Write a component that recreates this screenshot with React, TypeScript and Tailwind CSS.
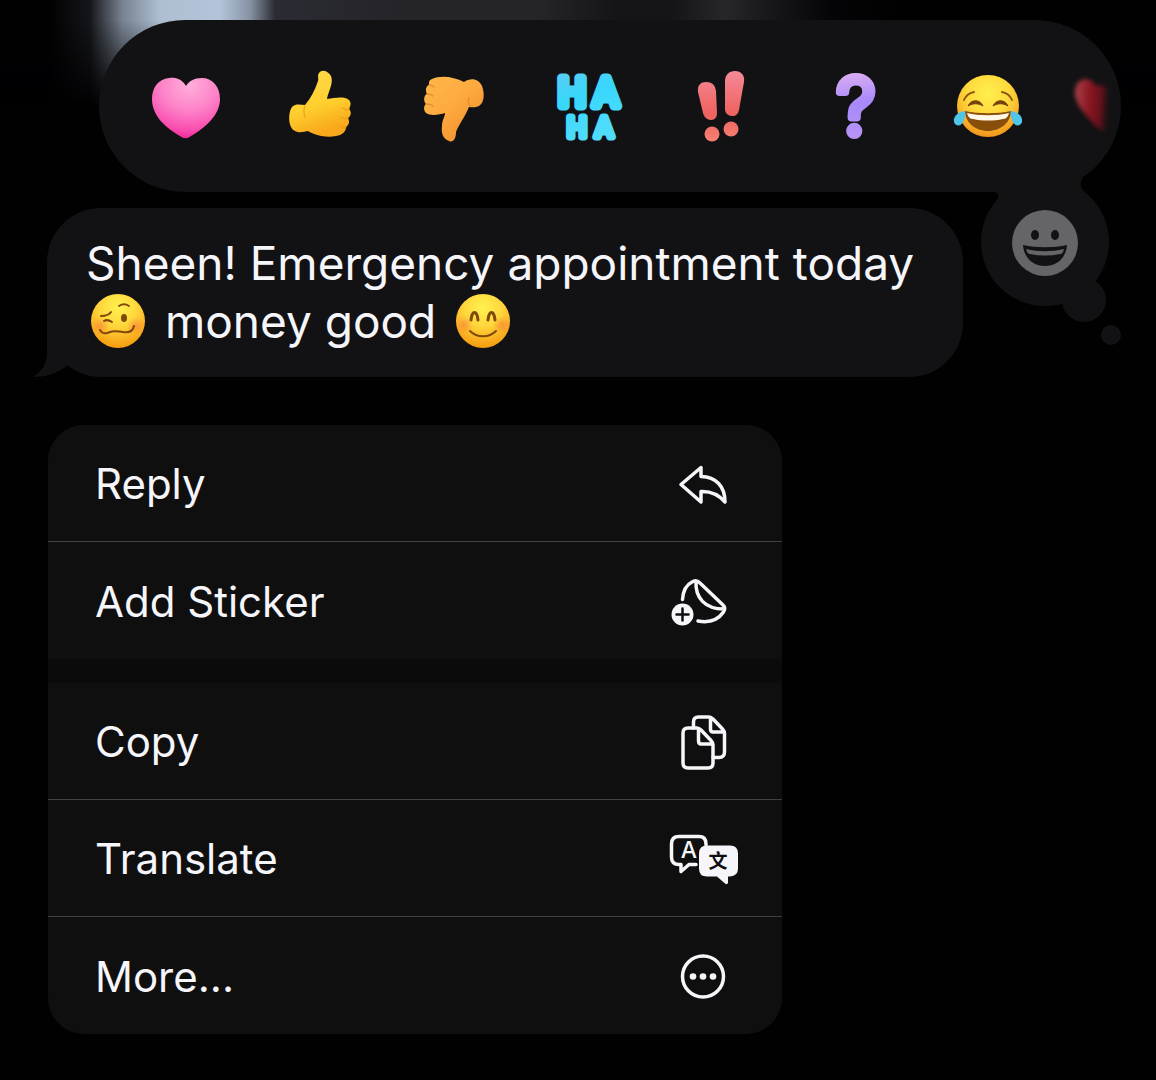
import type { ReactNode } from 'react';

function Heart() {
  return (
    <svg viewBox="0 0 80 80" className="h-20 w-20" aria-hidden="true">
      <defs>
        <radialGradient id="heart-fill" cx="0.55" cy="0.12" r="0.9">
          <stop offset="0" stopColor="#ffaedb" />
          <stop offset="0.45" stopColor="#fd84c9" />
          <stop offset="0.8" stopColor="#fa52b2" />
          <stop offset="1" stopColor="#f6289b" />
        </radialGradient>
      </defs>
      <path
        d="M40 20C35 12 28 11.500 23 12C12 13 6 22 6 33C6 50 20 62 34 70C38 73 41 73 45 70C59 62 74 49 74 33C74 20 66 12 56 12C48 12 43 15 40 20Z"
        fill="url(#heart-fill)"
      />
    </svg>
  );
}

function ThumbsUp() {
  return (
    <svg viewBox="0 0 80 80" className="h-20 w-20" aria-hidden="true">
      <defs>
        <linearGradient id="up-fill" x1="0" y1="0" x2="0.3" y2="1">
          <stop offset="0" stopColor="#ffd84f" />
          <stop offset="0.6" stopColor="#ffd02e" />
          <stop offset="1" stopColor="#f9a81c" />
        </linearGradient>
      </defs>
      <path
        d="M39 7C42 3 48 5 51 10C54 17 48 26 47 33C55 32 64 30 69 34C72 37 70 41 69 43C72 46 71 50 68 52C70 56 69 59 66 61C66 66 62 69 56 70C45 72 35 69 28 65C21 67 14 67 11 61C8 55 9 45 12 41C16 37 21 39 25 39C31 32 35 24 38 15C39 12 37 10 39 7Z"
        fill="url(#up-fill)"
      />
      <path
        d="M62 42C65 44 68 44 69 43M61 51C64 53 67 53 68 52M60 60C63 62 65 62 66 61M25 40C23 44 24 48 25 51"
        fill="none"
        stroke="#eb991c"
        strokeOpacity="0.7"
        strokeWidth="1.500"
        strokeLinecap="round"
      />
    </svg>
  );
}

function ThumbsDown() {
  return (
    <svg viewBox="0 0 80 80" className="h-20 w-20" aria-hidden="true">
      <defs>
        <linearGradient id="down-fill" x1="0" y1="0" x2="0.8" y2="1">
          <stop offset="0" stopColor="#ffb849" />
          <stop offset="0.5" stopColor="#fdaa3f" />
          <stop offset="1" stopColor="#ef8d2c" />
        </linearGradient>
      </defs>
      <path
        d="M18 13C27 9 40 11 50 16C57 11 65 13 68 20C71 28 70 37 65 40C61 42 57 41 55 41C51 51 45 58 42 66C42 73 39 77 35 75C29 73 27 67 28 60C28 54 31 51 31 47C25 49 16 50 12 47C9 44 10 39 12 38C9 35 10 29 13 28C11 24 12 20 15 19C15 16 15 14 18 13Z"
        fill="url(#down-fill)"
      />
      <path
        d="M15 19C17 19 19 20 20 21M13 28C16 28 18 29 19 30M12 38C15 38 18 39 19 40M56 40C54 37 54 34 55 32"
        fill="none"
        stroke="#dd8425"
        strokeOpacity="0.7"
        strokeWidth="1.500"
        strokeLinecap="round"
      />
    </svg>
  );
}

function HaHa() {
  return (
    <svg
      viewBox="0 0 80 80"
      className="h-20 w-20 overflow-visible font-[Roboto,sans-serif]"
      aria-hidden="true"
      fill="url(#haha-fill)"
      stroke="url(#haha-fill)"
      strokeLinejoin="round"
      textAnchor="middle"
    >
      <defs>
        <linearGradient id="haha-fill" gradientUnits="userSpaceOnUse" x1="10" y1="8" x2="35" y2="76">
          <stop offset="0" stopColor="#57cdf3" />
          <stop offset="0.4" stopColor="#38d7fb" />
          <stop offset="1" stopColor="#52dcfb" />
        </linearGradient>
      </defs>
      <text x="24" y="40" fontSize="38" strokeWidth="9">H</text>
      <text x="58" y="40" fontSize="38" strokeWidth="9">A</text>
      <text x="29" y="71" fontSize="27" strokeWidth="7">H</text>
      <text x="56" y="71" fontSize="27" strokeWidth="7">A</text>
    </svg>
  );
}

function Exclaim() {
  return (
    <svg viewBox="0 0 80 80" className="h-20 w-20" aria-hidden="true" fill="url(#bang-fill)">
      <defs>
        <linearGradient id="bang-fill" gradientUnits="userSpaceOnUse" x1="0" y1="5" x2="0" y2="76">
          <stop offset="0" stopColor="#f58a98" />
          <stop offset="0.6" stopColor="#ef625f" />
          <stop offset="1" stopColor="#f58173" />
        </linearGradient>
      </defs>
      <path d="M16 26C15 19 19 16 24 16C30 16 33 19 34 25L35 47C35 51 33 54 29 54C25 54 22 51 21 47Z" />
      <circle cx="30" cy="68" r="7.500" />
      <path d="M43 15C43 9 47 5 53 5C59 5 63 9 62 16L57 44C56 48 54 50 50 50C46 50 43 47 43 43Z" />
      <circle cx="49" cy="63" r="7.500" />
    </svg>
  );
}

function Question() {
  return (
    <svg
      viewBox="0 0 80 80"
      className="h-20 w-20 overflow-visible font-[Inter,sans-serif] font-light"
      aria-hidden="true"
    >
      <defs>
        <linearGradient id="question-fill" gradientUnits="userSpaceOnUse" x1="36" y1="6" x2="42" y2="74">
          <stop offset="0" stopColor="#dcaef1" />
          <stop offset="0.45" stopColor="#a789fa" />
          <stop offset="1" stopColor="#b894f5" />
        </linearGradient>
      </defs>
      <text
        x="40"
        y="69"
        fontSize="78"
        textAnchor="middle"
        fill="url(#question-fill)"
        stroke="url(#question-fill)"
        strokeWidth="8"
        strokeLinejoin="round"
      >
        ?
      </text>
    </svg>
  );
}

function Joy() {
  return (
    <svg viewBox="0 0 80 80" className="h-20 w-20" aria-hidden="true">
      <defs>
        <radialGradient id="joy-fill" cx="0.5" cy="0.3" r="0.7">
          <stop offset="0" stopColor="#fff04d" />
          <stop offset="0.5" stopColor="#ffd83c" />
          <stop offset="1" stopColor="#f2951c" />
        </radialGradient>
      </defs>
      <circle cx="38" cy="40" r="31" fill="url(#joy-fill)" />
      <path d="M14 34C16 29 19 27 24 26M62 34C60 29 57 27 52 26" fill="none" stroke="#8f560c" strokeWidth="2" strokeLinecap="round" />
      <path d="M18 40C21 33 30 33 33 40C28 37 23 37 18 40ZM43 40C46 33 55 33 58 40C53 37 48 37 43 40Z" fill="#74420a" stroke="#74420a" />
      <path d="M15 45C28 48 48 48 61 45C61 56 51 65 38 65C25 65 15 56 15 45Z" fill="#8a4e0b" />
      <path d="M17 47C29 50 47 50 59 47C58 51 56 53 53 53C44 55 32 55 23 53C20 53 18 51 17 47Z" fill="#fff8e8" />
      <path d="M15 45C8 46 3 50 4 56C5 60 11 61 13 56C15 52 16 48 15 45Z" fill="#50c5ea" />
      <path d="M61 45C68 46 73 50 72 56C71 60 65 61 63 56C61 52 60 48 61 45Z" fill="#50c5ea" />
    </svg>
  );
}

function Woozy() {
  return (
    <svg viewBox="0 0 56 56" className="-my-1 mr-1.5 ml-1 inline-block h-14 w-14 align-[-7px]" role="img" aria-label="woozy face">
      <defs>
        <radialGradient id="face-fill" cx="0.5" cy="0.25" r="0.78">
          <stop offset="0" stopColor="#fff24f" />
          <stop offset="0.45" stopColor="#ffd63c" />
          <stop offset="1" stopColor="#f5960c" />
        </radialGradient>
        <radialGradient id="blush">
          <stop offset="0" stopColor="#fa7a3c" stopOpacity="0.6" />
          <stop offset="1" stopColor="#fa7a3c" stopOpacity="0" />
        </radialGradient>
      </defs>
      <circle cx="28" cy="28" r="27" fill="url(#face-fill)" />
      <circle cx="10" cy="33" r="9" fill="url(#blush)" />
      <circle cx="46" cy="33" r="9" fill="url(#blush)" />
      <ellipse cx="34" cy="25" rx="3" ry="4" fill="#80490b" />
      <g fill="none" stroke="#80490b" strokeWidth="2" strokeLinecap="round">
        <path d="M29 13C32 11 36 11 39 13M11 23C15 23 19 22 21 19M14 28C17 26 19 27 22 29" />
        <path d="M10 37C12 41 16 41 20 39C25 37 29 39 33 39C39 40 43 38 44 33" />
      </g>
    </svg>
  );
}

function Smiling() {
  return (
    <svg viewBox="0 0 56 56" className="-my-1 ml-1.5 inline-block h-14 w-14 align-[-7px]" role="img" aria-label="smiling face">
      <circle cx="28" cy="28" r="27" fill="url(#face-fill)" />
      <circle cx="9" cy="32" r="9" fill="url(#blush)" />
      <circle cx="47" cy="32" r="9" fill="url(#blush)" />
      <g fill="none" stroke="#80490b" strokeLinecap="round">
        <path d="M16 27C17 17 22 17 23 27M33 27C34 17 39 17 40 27" strokeWidth="3" />
        <path d="M15 38C22 45 34 45 41 38" strokeWidth="2" />
      </g>
    </svg>
  );
}

function MenuIcon({ children }: { children: ReactNode }) {
  return (
    <svg
      viewBox="0 0 72 72"
      className="h-[72px] w-[72px] shrink-0"
      fill="none"
      stroke="#f5f5fa"
      strokeWidth="3.500"
      strokeLinecap="round"
      strokeLinejoin="round"
      aria-hidden="true"
    >
      {children}
    </svg>
  );
}

const replyIcon = (
  <MenuIcon>
    <path d="M34 19.500L14 36.500L34 54V43.500C45 43 52 47 58 54C58 38 49 29 34 28.500Z" />
  </MenuIcon>
);

const stickerIcon = (
  <MenuIcon>
    <path d="M15.500 34.500C16 26 19 20 25 17C28 15 30 15 33 18L56 40C58 42 58.500 44 56.500 47C51 55 42 58 31 56M29 16C28 33 38 44 57 44" />
    <circle cx="15.500" cy="49.500" r="11" fill="#f5f5fa" stroke="none" />
    <path d="M9.500 49.500H21.500M15.500 43.500V55.500" stroke="#0f0f10" strokeWidth="2.500" />
  </MenuIcon>
);

const copyIcon = (
  <MenuIcon>
    <path d="M26.500 22V16Q26.500 11 31.500 11H42Q44 11 46 13L55.500 23Q57.500 25 57.500 28V46Q57.500 51.500 52 51.500H46M43.500 12V23Q43.500 26 46 26H56" />
    <path d="M21 22H30Q32 22 34 24L44 34.500Q46 36.500 46 39V57Q46 62 41 62H21Q16 62 16 57V27Q16 22 21 22ZM31.500 23V34.500Q31.500 38 34 38H45" />
  </MenuIcon>
);

const translateIcon = (
  <MenuIcon>
    <path d="M29 41.500H22L14 48.500V41.500H12Q4.500 41.500 4.500 34V21Q4.500 13.500 12 13.500H32Q39 13.500 39 21V22" />
    <text
      x="22"
      y="35"
      fontSize="23"
      textAnchor="middle"
      fill="#f5f5fa"
      stroke="none"
      className="font-[Inter,sans-serif] font-medium"
    >
      A
    </text>
    <path
      d="M40 22.500H63Q71 22.500 71 30.500V45.500Q71 53 63 53.500H61V60Q60 62 58 60.500L50 53.500H40Q32 53.500 32 45.500V30.500Q32 22.500 40 22.500Z"
      fill="#f5f5fa"
      stroke="none"
    />
    <text
      x="51"
      y="45"
      fontSize="19"
      textAnchor="middle"
      fill="#0f0f10"
      stroke="none"
      className="font-['Noto_Sans_CJK_SC',sans-serif] font-bold"
    >
      文
    </text>
  </MenuIcon>
);

const moreIcon = (
  <MenuIcon>
    <circle cx="36" cy="36.500" r="20.500" />
    <g fill="#f5f5fa" stroke="none">
      <circle cx="26" cy="36.500" r="3.300" />
      <circle cx="36" cy="36.500" r="3.300" />
      <circle cx="46" cy="36.500" r="3.300" />
    </g>
  </MenuIcon>
);

const reactions = [
  { label: 'Love', icon: <Heart /> },
  { label: 'Like', icon: <ThumbsUp /> },
  { label: 'Dislike', icon: <ThumbsDown /> },
  { label: 'Laugh', icon: <HaHa /> },
  { label: 'Emphasize', icon: <Exclaim /> },
  { label: 'Question', icon: <Question /> },
  { label: 'Tears of joy', icon: <Joy /> },
];

const menuGroups = [
  [
    { label: 'Reply', icon: replyIcon },
    { label: 'Add Sticker', icon: stickerIcon },
  ],
  [
    { label: 'Copy', icon: copyIcon },
    { label: 'Translate', icon: translateIcon },
    { label: 'More...', icon: moreIcon },
  ],
];

function ReactionBar() {
  return (
    <div className="relative mr-[35px] ml-[99px]">
      <div className="flex h-[172px] items-center overflow-hidden rounded-full bg-[#121214] pl-5">
        {reactions.map((reaction) => (
          <button key={reaction.label} aria-label={reaction.label} className="flex w-[134px] shrink-0 justify-center">
            {reaction.icon}
          </button>
        ))}
        {/* next reaction, fading out at the scroll edge */}
        <svg viewBox="0 0 50 80" className="ml-3 h-20 w-[50px] shrink-0 overflow-visible blur-[2px]" aria-hidden="true">
          <defs>
            <linearGradient id="edge-heart" x1="0" y1="0" x2="1" y2="0.1">
              <stop offset="0" stopColor="#a8454b" />
              <stop offset="0.45" stopColor="#8a1622" />
              <stop offset="0.75" stopColor="#6b111b" />
              <stop offset="1" stopColor="#6b111b" stopOpacity="0" />
            </linearGradient>
          </defs>
          <path d="M6 24C8 10 22 10 27 20C32 18 38 20 41 26V60C39 68 32 66 27 60C18 50 4 38 6 24Z" fill="url(#edge-heart)" />
        </svg>
      </div>
      <div className="absolute top-[142px] right-0 z-10">
        <svg viewBox="0 0 144 190" className="h-[190px] w-36" fill="#121214" aria-hidden="true">
          <path d="M16 30Q24 31 20 38L60 70L107 29Q101 24 106 15L90 12H40Z" />
          <circle cx="68" cy="80" r="64" />
          <circle cx="107" cy="138" r="22" />
          <circle cx="134" cy="173" r="10" />
        </svg>
        <button aria-label="Choose emoji" className="absolute top-[47px] left-[34px]">
          <svg viewBox="0 0 68 68" className="h-[68px] w-[68px]" aria-hidden="true">
            <circle cx="34" cy="34" r="33" fill="#656569" />
            <ellipse cx="24" cy="26" rx="4" ry="5" fill="#121214" />
            <ellipse cx="44" cy="26" rx="4" ry="5" fill="#121214" />
            <path d="M12 36C25 39 43 39 56 36C55 49 46 57 34 57C22 57 13 49 12 36Z" fill="#121214" />
            <path d="M15 40C28 43 40 43 53 40C52 44 51 45 49 45C39 47 29 47 19 45C17 45 16 43 15 40Z" fill="#656569" />
          </svg>
        </button>
      </div>
    </div>
  );
}

function Message() {
  return (
    <div className="relative mt-4 mr-[193px] ml-[47px]">
      <svg viewBox="0 0 50 60" className="absolute bottom-0 -left-3.5 h-[60px] w-[50px]" fill="#121214" aria-hidden="true">
        <path d="M14 0V38C13 48 8 55 0 60C12 60 23 57 34 49L50 20Z" />
      </svg>
      <p className="relative rounded-[54px] bg-[#121214] pt-[26px] pr-6 pb-[27px] pl-[39px] font-[Inter,sans-serif] text-[46px] leading-[58px] text-[#f5f5fa]">
        Sheen! Emergency appointment today
        <br />
        <Woozy /> money good <Smiling />
      </p>
    </div>
  );
}

function ContextMenu() {
  return (
    <div
      role="menu"
      className="mt-12 ml-12 flex max-w-[734px] flex-col gap-6 overflow-hidden rounded-[36px] bg-[#0b0b0c] font-[Inter,sans-serif] text-[42px] text-[#f5f5fa]"
    >
      {menuGroups.map((group, i) => (
        <div key={i} className="bg-[#0f0f10]">
          {group.map((item) => (
            <button
              key={item.label}
              role="menuitem"
              className="flex h-[117px] w-full items-center justify-between border-b border-[#414144] pt-px pr-[43px] pl-[47px] text-left last:border-b-0"
            >
              {item.label}
              {item.icon}
            </button>
          ))}
        </div>
      ))}
    </div>
  );
}

export default function App() {
  return (
    <main className="relative isolate min-h-screen overflow-hidden bg-[#010102] pt-5 pb-[46px]">
      <div className="absolute inset-x-0 top-0 -z-10 h-40 bg-[linear-gradient(90deg,#010102_50px,#15161a_90px,#77818f_122px,#aebfd3_160px,#b3c4da_220px,#8793a4_250px,#2b2c33_275px,#242429_400px,#242429_540px,#131318_620px,#131318_670px,#26262b_725px,#050507_830px,#010102_900px)] mask-[linear-gradient(#000_20px,transparent_110px)]" />
      <ReactionBar />
      <Message />
      <ContextMenu />
    </main>
  );
}
